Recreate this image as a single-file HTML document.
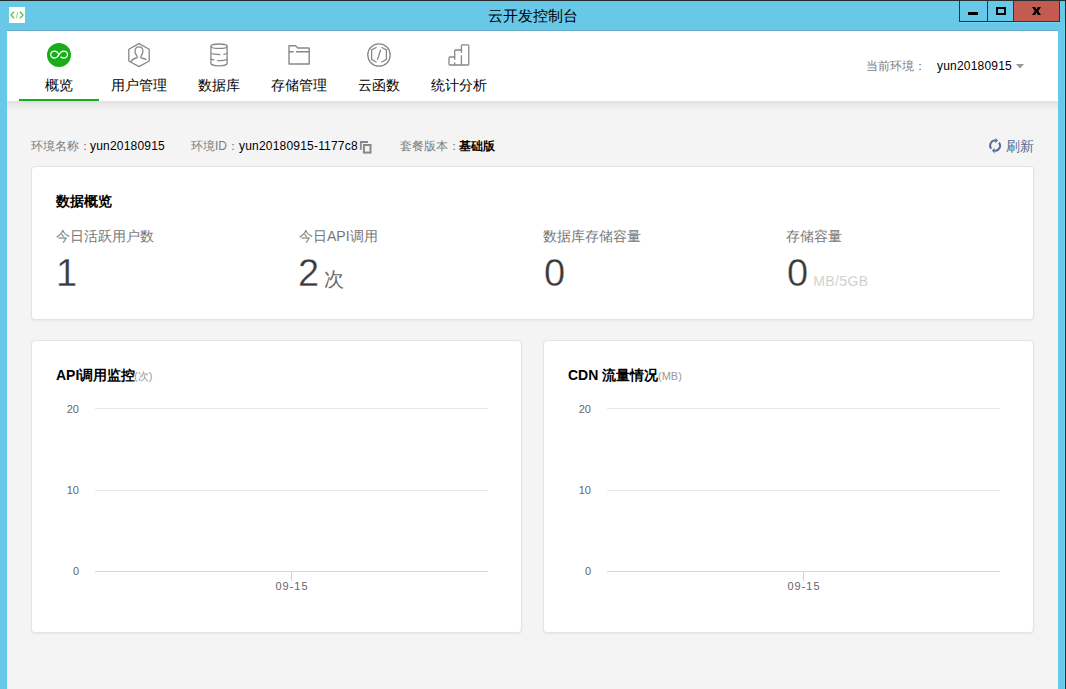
<!DOCTYPE html>
<html><head><meta charset="utf-8">
<style>
*{margin:0;padding:0;box-sizing:border-box}
html,body{width:1066px;height:689px;overflow:hidden;background:#68c8e8;font-family:"Liberation Sans",sans-serif;color:#000}
.a{position:absolute;white-space:nowrap}
#frame{position:absolute;left:0;top:0;width:1066px;height:689px;background:#68c8e8}
#topline{position:absolute;left:0;top:0;width:1066px;height:1px;background:#262b2d}
#rightline{position:absolute;left:1065px;top:0;width:1px;height:689px;background:#2b2b2b}
#appicon{position:absolute;left:9px;top:7px;width:16px;height:16px;background:#fff}
#title{position:absolute;left:0;top:7px;width:1066px;text-align:center;font-size:15px;line-height:18px;color:#000}
.wb{position:absolute;top:0;height:22px;border:1px solid #2e2e2e}
#content{position:absolute;left:7px;top:31px;width:1051px;height:658px;background:#f4f4f4}
#nav{position:absolute;left:7px;top:31px;width:1051px;height:70px;background:#fff}
#navshadow{position:absolute;left:7px;top:101px;width:1051px;height:10px;background:linear-gradient(#e2e2e2 0px,#e8e8e8 3px,#f4f4f4 10px)}
.tab{position:absolute;width:80px;text-align:center;font-size:14px;line-height:16px;color:#000}
.card{position:absolute;background:#fff;border:1px solid #e3e3e3;border-radius:4px;box-shadow:0 1px 2px rgba(0,0,0,.05)}
.lbl{font-size:12px;line-height:14px;color:#7c7c7c}
.val{font-size:12px;line-height:14px;color:#000;letter-spacing:0.2px}
.big{font-size:38px;line-height:40px;color:#3a3a3a;-webkit-text-stroke:0.3px #fff}
.ctitle{font-size:14px;line-height:16px;font-weight:bold;color:#000}
.ylab{font-size:11px;line-height:12px;color:#666;text-align:right;width:30px}
.grid{position:absolute;height:1px;background:#e6e6e6}
.axis{position:absolute;height:1px;background:#ccd6eb}
</style></head><body>
<div id="frame"></div>
<div id="topline"></div>
<div id="rightline"></div>
<div id="appicon">
<svg width="16" height="16" viewBox="0 0 16 16"><path d="M5 4.6 L2 8 L5 11.4 M11 4.6 L14 8 L11 11.4" stroke="#4cc14a" stroke-width="1.3" fill="none"/><path d="M8.6 5 L7.4 11" stroke="#8fd58d" stroke-width="1" fill="none"/></svg>
</div>
<div id="title">云开发控制台</div>
<!-- window buttons -->
<div class="wb" style="left:959px;width:29px;background:#68c8e8"></div>
<div class="wb" style="left:987px;width:27px;background:#68c8e8"></div>
<div class="wb" style="left:1013px;width:47px;background:#c45b50;border-color:#4a2e2a;border-top-color:#262b2d"></div>
<div class="a" style="left:968px;top:12px;width:10px;height:3px;background:#000"></div>
<div class="a" style="left:996px;top:7px;width:10px;height:8px;border:2px solid #000"></div>
<svg class="a" style="left:1031px;top:6px" width="11" height="10" viewBox="0 0 11 10"><path d="M1 1 L4.2 1 L5.5 3.5 L6.8 1 L10 1 L7.3 5 L10 9 L6.8 9 L5.5 6.5 L4.2 9 L1 9 L3.7 5 Z" fill="#000"/></svg>

<div id="content"></div>
<div class="a" style="left:7px;top:30px;width:1051px;height:1px;background:#6aadca"></div>
<div class="a" style="left:1064px;top:22px;width:1px;height:667px;background:#6fd5f5"></div>
<div class="a" style="left:959px;top:22px;width:101px;height:1px;background:#6fd5f5"></div>
<div id="nav"></div>
<div id="navshadow"></div>

<!-- nav icons -->
<svg class="a" style="left:39px;top:35px" width="40" height="40" viewBox="0 0 40 40">
 <circle cx="20" cy="20" r="12" fill="#1aad19"/>
 <path d="M20.1 19.55 C21.3 17.3 22.6 16.1 24.6 16.1 A3.9 3.45 0 0 1 24.6 23 C23.2 23 22.4 22.5 21.6 21.7 M20.1 19.55 C18.9 21.8 17.6 23 15.6 23 A3.9 3.45 0 0 1 15.6 16.1 C17.6 16.1 18.9 17.3 20.1 19.55" stroke="#fff" stroke-width="1.3" fill="none"/>
</svg>
<svg class="a" style="left:119px;top:35px" width="40" height="40" viewBox="0 0 40 40">
 <path d="M20 8.6 L30.2 14.3 L30.2 26 L20 31.6 L9.8 26 L9.8 14.3 Z" stroke="#888" stroke-width="1.3" fill="none" stroke-linejoin="round"/>
 <path d="M12 26.8 C12.8 24.6 14.5 23.6 17.5 23 C18.6 22.7 18.4 21.6 17.8 20.8 C16.6 19.5 16 18 16 16.2 C16 13.6 17.6 11.8 20 11.8 C22.4 11.8 23.9 13.6 23.9 16.2 C23.9 18 23.3 19.5 22.2 20.8 C21.6 21.6 21.4 22.7 22.6 23 C24.6 23.4 26 23.8 27 24.6" stroke="#888" stroke-width="1.3" fill="none" stroke-linecap="round"/>
</svg>
<svg class="a" style="left:199px;top:35px" width="40" height="40" viewBox="0 0 40 40">
 <ellipse cx="20" cy="11.2" rx="8.1" ry="2.2" stroke="#888" stroke-width="1.3" fill="none"/>
 <path d="M11.9 11.2 L11.9 28.2 C11.9 29.6 15.5 30.8 20 30.8 C24.5 30.8 28.1 29.6 28.1 28.2 L28.1 11.2" stroke="#888" stroke-width="1.3" fill="none"/>
 <path d="M11.9 17.9 C12.8 19 15.5 19.6 21.4 19.6 M24.4 19.4 C26.6 19.2 27.8 18.8 28.1 17.9" stroke="#888" stroke-width="1.3" fill="none"/>
 <path d="M11.9 24 C12.3 24.5 13.6 24.8 15.4 24.9 M18.3 25.7 C23.8 25.7 27.6 25 28.1 24" stroke="#888" stroke-width="1.3" fill="none"/>
</svg>
<svg class="a" style="left:279px;top:35px" width="40" height="40" viewBox="0 0 40 40">
 <path d="M10 10.8 L16.6 10.8 L18.8 13 L29.6 13 Q30.2 13 30.2 13.6 L30.2 29 L10 29 Z" stroke="#888" stroke-width="1.4" fill="none" stroke-linejoin="round"/>
 <path d="M10 16.8 L14.6 16.8 M16.9 16.8 L30.2 16.8" stroke="#888" stroke-width="1.4" fill="none"/>
</svg>
<svg class="a" style="left:359px;top:35px" width="40" height="40" viewBox="0 0 40 40">
 <circle cx="20" cy="20" r="11.2" stroke="#888" stroke-width="1.3" fill="none"/>
 <path d="M17.6 12.3 L12.6 15 L12.6 24.4 L17.6 27.2 M22.4 12.3 L27.4 15 L27.4 24.4 L22.4 27.2" stroke="#888" stroke-width="1.3" fill="none"/>
 <path d="M21.5 15.2 L18.6 24.4" stroke="#888" stroke-width="1.3" fill="none" stroke-linecap="round"/>
</svg>
<svg class="a" style="left:439px;top:35px" width="40" height="40" viewBox="0 0 40 40">
 <path d="M11 30 Q10 30 10 29 L10 23 Q10 22 11 22 L15.7 22 L15.7 16 Q15.7 15 16.7 15 L22.4 15 L22.4 10.8 Q22.4 9.8 23.4 9.8 L28.8 9.8 Q29.8 9.8 29.8 10.8 L29.8 29 Q29.8 30 28.8 30 Z" stroke="#888" stroke-width="1.3" fill="none" stroke-linejoin="round"/>
 <path d="M15.7 22 L15.7 24.8 M15.7 27.2 L15.7 30 M22.4 15 L22.4 17.9 M22.4 20.2 L22.4 30" stroke="#888" stroke-width="1.3" fill="none"/>
</svg>

<div class="tab a" style="left:19px;top:77px">概览</div>
<div class="tab a" style="left:99px;top:77px">用户管理</div>
<div class="tab a" style="left:179px;top:77px">数据库</div>
<div class="tab a" style="left:259px;top:77px">存储管理</div>
<div class="tab a" style="left:339px;top:77px">云函数</div>
<div class="tab a" style="left:419px;top:77px">统计分析</div>
<div class="a" style="left:19px;top:99px;width:80px;height:2px;background:#1aad19"></div>

<div class="a lbl" style="left:866px;top:59px">当前环境：</div>
<div class="a val" style="left:937px;top:59px">yun20180915</div>
<svg class="a" style="left:1016px;top:64px" width="8" height="5" viewBox="0 0 8 5"><path d="M0 0 L8 0 L4 4.5 Z" fill="#999"/></svg>

<!-- info row -->
<div class="a lbl" style="left:31px;top:139px">环境名称：</div>
<div class="a val" style="left:90px;top:139px">yun20180915</div>
<div class="a lbl" style="left:191px;top:139px">环境ID：</div>
<div class="a val" style="left:239px;top:139px">yun20180915-1177c8</div>
<svg class="a" style="left:359px;top:140px" width="14" height="14" viewBox="0 0 14 14"><path d="M1.8 9.8 L1.8 2 L9 2" stroke="#888" stroke-width="1.8" fill="none"/><rect x="4.9" y="5" width="6.6" height="7.6" stroke="#888" stroke-width="2" fill="none"/></svg>
<div class="a lbl" style="left:400px;top:139px">套餐版本：</div>
<div class="a val" style="left:459px;top:139px;font-weight:bold">基础版</div>
<svg class="a" style="left:986px;top:136px" width="18" height="20" viewBox="0 0 18 20"><path d="M5.2 12.6 A4.4 4.9 0 0 1 9.6 4.7" stroke="#576b95" stroke-width="2" fill="none"/><path d="M9.4 2 L12 4.6 L9.4 7.3 Z" fill="#576b95"/><path d="M13 6.6 A4.4 4.9 0 0 1 8.6 14.5" stroke="#576b95" stroke-width="2" fill="none"/><path d="M8.6 11.9 L6 14.5 L8.6 17.5 Z" fill="#576b95"/></svg>
<div class="a" style="left:1006px;top:138px;font-size:14px;line-height:16px;color:#576b95">刷新</div>

<!-- card 1 -->
<div class="card" style="left:31px;top:166px;width:1003px;height:154px"></div>
<div class="a ctitle" style="left:56px;top:193px">数据概览</div>
<div class="a" style="left:56px;top:228px;font-size:14px;line-height:16px;color:#777">今日活跃用户数</div>
<div class="a" style="left:299px;top:228px;font-size:14px;line-height:16px;color:#777">今日API调用</div>
<div class="a" style="left:543px;top:228px;font-size:14px;line-height:16px;color:#777">数据库存储容量</div>
<div class="a" style="left:786px;top:228px;font-size:14px;line-height:16px;color:#777">存储容量</div>
<div class="a big" style="left:56px;top:253px">1</div>
<div class="a big" style="left:298px;top:253px">2</div>
<div class="a" style="left:324px;top:268px;font-size:20px;line-height:22px;color:#666">次</div>
<div class="a big" style="left:544px;top:253px">0</div>
<div class="a big" style="left:787px;top:253px">0<span style="font-size:14px;color:#bbb;margin-left:5px;letter-spacing:0.4px">MB/5GB</span></div>

<!-- card 2 -->
<div class="card" style="left:31px;top:340px;width:491px;height:293px"></div>
<div class="a ctitle" style="left:56px;top:367px">API调用监控</div>
<div class="a" style="left:134px;top:369px;font-size:11px;line-height:14px;color:#999">(次)</div>
<div class="a ylab" style="left:49px;top:403px">20</div>
<div class="a ylab" style="left:49px;top:484px">10</div>
<div class="a ylab" style="left:49px;top:565px">0</div>
<div class="grid" style="left:95px;top:408px;width:393px"></div>
<div class="grid" style="left:95px;top:490px;width:393px"></div>
<div class="axis" style="left:95px;top:571px;width:393px"></div>
<div class="a" style="left:291px;top:572px;width:1px;height:9px;background:#ccd6eb"></div>
<div class="a" style="left:262px;top:580px;width:60px;text-align:center;font-size:11px;line-height:12px;color:#666;letter-spacing:1px">09-15</div>

<!-- card 3 -->
<div class="card" style="left:543px;top:340px;width:491px;height:293px"></div>
<div class="a ctitle" style="left:568px;top:367px">CDN 流量情况</div>
<div class="a" style="left:658px;top:369px;font-size:11px;line-height:14px;color:#999">(MB)</div>
<div class="a ylab" style="left:561px;top:403px">20</div>
<div class="a ylab" style="left:561px;top:484px">10</div>
<div class="a ylab" style="left:561px;top:565px">0</div>
<div class="grid" style="left:607px;top:408px;width:393px"></div>
<div class="grid" style="left:607px;top:490px;width:393px"></div>
<div class="axis" style="left:607px;top:571px;width:393px"></div>
<div class="a" style="left:803px;top:572px;width:1px;height:9px;background:#ccd6eb"></div>
<div class="a" style="left:774px;top:580px;width:60px;text-align:center;font-size:11px;line-height:12px;color:#666;letter-spacing:1px">09-15</div>
</body></html>
